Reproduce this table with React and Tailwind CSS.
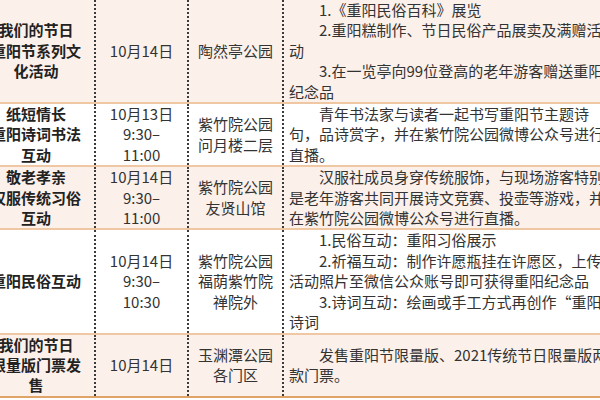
import React from "react";

const rows = [
  {
    bg: "bg-[#fcf0ea]",
    name: ["我们的节日", "重阳节系列文", "化活动"],
    date: ["10月14日"],
    place: ["陶然亭公园"],
    detail: [
      ["1.《重阳民俗百科》展览", true],
      ["2.重阳糕制作、节日民俗产品展卖及满赠活", true],
      ["动", false],
      ["3.在一览亭向99位登高的老年游客赠送重阳", true],
      ["纪念品", false],
    ],
  },
  {
    bg: "bg-white",
    name: ["纸短情长", "重阳诗词书法", "互动"],
    date: ["10月13日", "9:30–", "11:00"],
    place: ["紫竹院公园", "问月楼二层"],
    detail: [
      ["青年书法家与读者一起书写重阳节主题诗", true],
      ["句，品诗赏字，并在紫竹院公园微博公众号进行", false],
      ["直播。", false],
    ],
  },
  {
    bg: "bg-[#fcf0ea]",
    name: ["敬老孝亲", "汉服传统习俗", "互动"],
    date: ["10月14日", "9:30–", "11:00"],
    place: ["紫竹院公园", "友贤山馆"],
    detail: [
      ["汉服社成员身穿传统服饰，与现场游客特别", true],
      ["是老年游客共同开展诗文竞赛、投壶等游戏，并", false],
      ["在紫竹院公园微博公众号进行直播。", false],
    ],
  },
  {
    bg: "bg-white",
    name: ["重阳民俗互动"],
    date: ["10月14日", "9:30–", "10:30"],
    place: ["紫竹院公园", "福荫紫竹院", "禅院外"],
    detail: [
      ["1.民俗互动：重阳习俗展示", true],
      ["2.祈福互动：制作许愿瓶挂在许愿区，上传", true],
      ["活动照片至微信公众账号即可获得重阳纪念品", false],
      ["3.诗词互动：绘画或手工方式再创作“重阳”", true],
      ["诗词", false],
    ],
  },
  {
    bg: "bg-[#fcf0ea]",
    name: ["我们的节日", "限量版门票发", "售"],
    date: ["10月14日"],
    place: ["玉渊潭公园", "各门区"],
    detail: [
      ["发售重阳节限量版、2021传统节日限量版两", true],
      ["款门票。", false],
    ],
    last: true,
  },
];

const cellClass = "flex flex-col justify-center items-center text-center border-r-2 border-dotted border-[#3a3a3a]";

export default function App() {
  return (
    <div className="w-[600px] h-[400px] overflow-hidden bg-white font-['Noto_Sans_CJK_SC',sans-serif] text-[15px] leading-[20.4px] text-[#333]">
      <div className="ml-[-22px] w-[720px]">
        {rows.map((row, i) => (
          <div
            key={i}
            className={`grid grid-cols-[118px_93px_95px_1fr] ${row.bg} ${
              row.last ? "border-b-[2px] border-[#e0a468]" : "border-b-2 border-[#efc7a2]"
            }`}
          >
            <div className={`${cellClass} font-bold text-[#222]`}>
              {row.name.map((t) => (
                <div key={t} className="whitespace-nowrap">{t}</div>
              ))}
            </div>
            <div className={cellClass}>
              {row.date.map((t) => (
                <div key={t} className="whitespace-nowrap">{t}</div>
              ))}
            </div>
            <div className={cellClass}>
              {row.place.map((t) => (
                <div key={t} className="whitespace-nowrap">{t}</div>
              ))}
            </div>
            <div className="flex flex-col justify-center pl-[5px]">
              {row.detail.map(([t, indent]) => (
                <div key={t} className={`whitespace-nowrap ${indent ? "pl-[30px]" : ""}`}>
                  {t}
                </div>
              ))}
            </div>
          </div>
        ))}
      </div>
    </div>
  );
}
